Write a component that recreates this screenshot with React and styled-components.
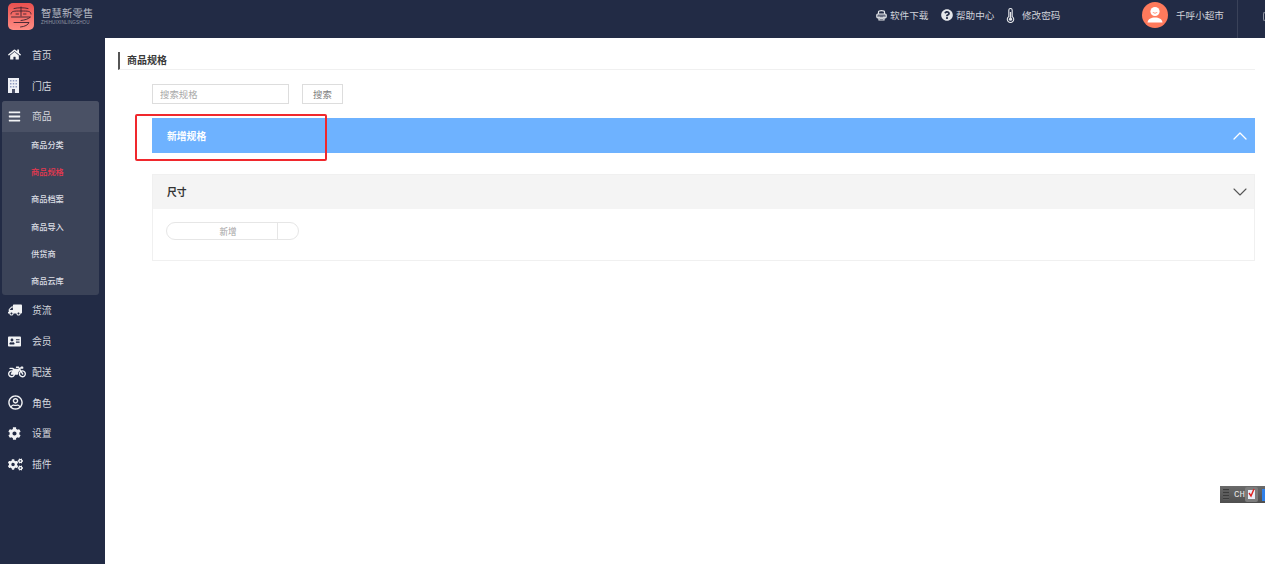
import React from 'react';
import styled, { createGlobalStyle } from 'styled-components';
import {
    FaAddressCard,
    FaBars,
    FaCog,
    FaCogs,
    FaHome,
    FaMotorcycle,
    FaQuestionCircle,
    FaRegUserCircle,
    FaTruck,
} from 'react-icons/fa';
import { ChevronDown, ChevronUp } from 'lucide-react';

const FONT = '"Noto Sans CJK SC", "Liberation Sans", sans-serif';

const GlobalStyle = createGlobalStyle`
    html, body {
        margin: 0;
        height: 100%;
        overflow: hidden;
        background: #fff;
        font-family: ${FONT};
    }
    * {
        box-sizing: border-box;
    }
`;

const Page = styled.div`
    width: 1265px;
    height: 564px;
    display: flex;
    flex-direction: column;
    position: relative;
    overflow: hidden;
`;

const Header = styled.header`
    height: 38px;
    flex: none;
    background: #222b45;
    display: flex;
    align-items: flex-start;
    color: #d0d3da;
    font-size: 9.6px;
`;

const Brand = styled.div`
    display: flex;
    gap: 7px;
    padding: 3px 0 0 8px;
    width: 876px;
    flex: none;
`;

const LogoMark = styled.svg`
    width: 26px;
    height: 27px;
    display: block;
`;

const BrandText = styled.div`
    display: flex;
    flex-direction: column;
    color: #b4b8c2;
`;

const BrandName = styled.div`
    font-size: 10.4px;
    line-height: 14px;
    margin-top: 3px;
    letter-spacing: 0.1px;
    white-space: nowrap;
`;

const BrandSub = styled.div`
    font-family: "Liberation Sans", sans-serif;
    font-size: 4.6px;
    line-height: 6px;
    white-space: nowrap;
    letter-spacing: 0.1px;
    color: #9297a5;
`;

const HeaderLink = styled.div`
    display: flex;
    align-items: center;
    height: 12px;
    margin-top: 9px;
    width: ${props => props.$width}px;
    flex: none;
    white-space: nowrap;
    svg {
        flex: none;
        color: #e4e6ea;
        margin-right: ${props => props.$gap}px;
    }
`;

const Avatar = styled.svg`
    width: 26px;
    height: 26px;
    margin-top: 2px;
    flex: none;
    display: block;
`;

const ShopName = styled.div`
    width: 61px;
    flex: none;
    margin: 9px 0 0 8px;
    line-height: 12px;
    white-space: nowrap;
`;

const HeaderDivider = styled.div`
    width: 1px;
    height: 38px;
    flex: none;
    background: #3a4259;
`;

const HeaderEdgeIcon = styled.div`
    width: 2px;
    height: 9px;
    margin: 12px 0 0 25px;
    flex: none;
    border-radius: 2px 0 0 2px;
    border: 1px solid #8d92a0;
    border-right: 0;
`;

const Body = styled.div`
    flex: 1;
    display: flex;
    min-height: 0;
`;

const Sidebar = styled.nav`
    width: 105px;
    flex: none;
    background: #222b45;
    padding-top: 1.5px;
`;

const NavRow = styled.div`
    height: 30.75px;
    display: flex;
    align-items: center;
    padding-left: 8px;
    color: #d6d8de;
    font-size: 9.8px;
    svg {
        flex: none;
        color: #f2f3f5;
    }
`;

const NavIcon = styled.span`
    width: 24px;
    flex: none;
    display: flex;
    align-items: center;
`;

const NavGroup = styled.div`
    width: 97px;
    margin-left: 2px;
    background: #3b4358;
    border-radius: 3px;
    overflow: hidden;
`;

const NavGroupHead = styled(NavRow)`
    background: #4a5165;
    padding-left: 6px;
`;

const SubItem = styled.div`
    height: 27.2px;
    padding: 0 0 2.5px 29px;
    display: flex;
    align-items: center;
    font-size: 8.2px;
    font-weight: 500;
    color: ${props => (props.$active ? '#e8384f' : '#dcdee4')};
`;

const FlippedTruck = styled(FaTruck)`
    transform: scaleX(-1);
`;

const Main = styled.main`
    flex: 1;
    min-width: 0;
    position: relative;
    padding: 14px 10px 0 13px;
`;

const TitleBar = styled.div`
    height: 18px;
    border-left: 2px solid #555;
    border-bottom: 1px solid #f0f0f0;
    padding-left: 7px;
    font-size: 10px;
    line-height: 16px;
    font-weight: 700;
    color: #3a3a3a;
`;

const Content = styled.div`
    padding-left: 34px;
`;

const SearchRow = styled.div`
    display: flex;
    gap: 13px;
    margin-top: 14px;
`;

const SearchInput = styled.input`
    width: 137px;
    height: 20px;
    border: 1px solid #ddd;
    outline: none;
    padding: 0 7px;
    font-family: ${FONT};
    font-size: 9.4px;
    &::placeholder {
        color: #a9a9a9;
        opacity: 1;
    }
`;

const SearchButton = styled.button`
    width: 41px;
    height: 20px;
    padding: 0;
    border: 1px solid #ddd;
    background: #fff;
    color: #808080;
    font-family: ${FONT};
    font-size: 9.4px;
`;

const AddBar = styled.div`
    height: 35px;
    margin-top: 14px;
    padding: 0 3px 0 15px;
    background: #6eb2ff;
    color: #fff;
    font-size: 9.8px;
    font-weight: 700;
    display: flex;
    align-items: center;
    justify-content: space-between;
`;

const SpecCard = styled.section`
    height: 87px;
    margin-top: 21px;
    border: 1px solid #f0f0f0;
`;

const SpecHead = styled.div`
    height: 34px;
    padding: 0 2px 0 14px;
    background: #f4f4f4;
    color: #333;
    font-size: 9.8px;
    font-weight: 700;
    display: flex;
    align-items: center;
    justify-content: space-between;
`;

const PillGroup = styled.div`
    width: 133px;
    height: 18px;
    margin: 13px 0 0 13px;
    border: 1px solid #e6e6e6;
    border-radius: 9px;
    display: flex;
`;

const PillLabel = styled.div`
    width: 111px;
    padding: 0 0 2px 12px;
    border-right: 1px solid #e6e6e6;
    color: #a3a3a3;
    font-size: 8.6px;
    line-height: 16px;
    text-align: center;
`;

const Annotation = styled.div`
    position: absolute;
    left: 30px;
    top: 76px;
    width: 192px;
    height: 47px;
    border: 2px solid #f0282d;
    border-radius: 2px;
    pointer-events: none;
`;

const ImeBar = styled.div`
    position: absolute;
    left: 1220px;
    top: 486px;
    width: 45px;
    height: 17px;
    background: linear-gradient(#6a6a6a, #4e4e4e);
    display: flex;
    align-items: center;
    overflow: hidden;
`;

const ImeGrip = styled.div`
    width: 6px;
    height: 11px;
    margin-left: 3px;
    flex: none;
    background: repeating-linear-gradient(#3c3c3c 0 1px, #5c5c5c 1px 3px);
`;

const ImeLang = styled.div`
    margin-left: 5px;
    width: 11px;
    flex: none;
    font-family: "Liberation Mono", monospace;
    font-size: 9px;
    color: #e6e6e6;
`;

const ImeTile = styled.svg`
    width: 13px;
    height: 15px;
    flex: none;
    display: block;
`;

const ImeBlue = styled.div`
    width: 6px;
    height: 12px;
    margin-left: 4px;
    flex: none;
    background: #2f80ea;
`;

const BuildingIcon = () => (
    <svg width='11' height='15' viewBox='0 0 11 15'>
        <rect width='11' height='15' fill='#eef0f6' />
        <g fill='#8f9bc0'>
            <rect x='2' y='2' width='1.5' height='1.5' />
            <rect x='4.75' y='2' width='1.5' height='1.5' />
            <rect x='7.5' y='2' width='1.5' height='1.5' />
            <rect x='2' y='5' width='1.5' height='1.5' />
            <rect x='4.75' y='5' width='1.5' height='1.5' />
            <rect x='7.5' y='5' width='1.5' height='1.5' />
            <rect x='2' y='8' width='1.5' height='1.5' />
            <rect x='4.75' y='8' width='1.5' height='1.5' />
            <rect x='7.5' y='8' width='1.5' height='1.5' />
        </g>
        <rect x='4' y='11' width='3' height='4' fill='#4a5068' />
    </svg>
);

const PrinterIcon = () => (
    <svg width='11' height='11' viewBox='0 0 11 11' fill='none' stroke='currentColor' strokeWidth='1.2'>
        <path d='M2.5 4 V2 C2.5 1 3.5 .7 5.5 .7 S8.5 1 8.5 2 V4' />
        <rect x='.8' y='4' width='9.4' height='3.8' rx='1' fill='currentColor' fillOpacity='.35' />
        <path d='M3 6.5 V10 H8 V6.5' />
        <path d='M4 8.5 H7' strokeWidth='.8' />
    </svg>
);

const ThermometerIcon = () => (
    <svg width='9' height='15' viewBox='0 0 9 15' fill='none' stroke='currentColor' strokeWidth='1.1'>
        <path d='M2.8 8.6 V2.2 a1.7 1.7 0 0 1 3.4 0 V8.6 a3.2 3.2 0 1 1 -3.4 0 Z' />
        <path d='M4.5 4 V11' strokeWidth='1.4' />
        <circle cx='4.5' cy='11.2' r='1.6' fill='currentColor' stroke='none' />
    </svg>
);

const AvatarMark = () => (
    <Avatar viewBox='0 0 26 26'>
        <circle cx='13' cy='13' r='13' fill='#ff7a5c' />
        <circle cx='13' cy='9.5' r='4.6' fill='#fff' />
        <path d='M10.8 10 C11.4 11.6 14.6 11.6 15.2 10' fill='none' stroke='#ff7a5c' strokeWidth='.8' />
        <path d='M5.5 20.5 C6 16.8 9 15.4 13 15.4 S20 16.8 20.5 20.5 Z' fill='#fff' />
    </Avatar>
);

const NAV_TOP = [
    { label: '首页', icon: <FaHome size={13} /> },
    { label: '门店', icon: <BuildingIcon /> },
];

const NAV_SUB = ['商品分类', '商品规格', '商品档案', '商品导入', '供货商', '商品云库'];

const NAV_BOTTOM = [
    { label: '货流', icon: <FlippedTruck size={14} /> },
    { label: '会员', icon: <FaAddressCard size={13} /> },
    { label: '配送', icon: <FaMotorcycle size={18} /> },
    { label: '角色', icon: <FaRegUserCircle size={15} /> },
    { label: '设置', icon: <FaCog size={13} /> },
    { label: '插件', icon: <FaCogs size={15} /> },
];

const Logo = () => (
    <LogoMark viewBox='0 0 26 27'>
        <defs>
            <linearGradient id='logo-fill' x1='0' y1='0' x2='0' y2='1'>
                <stop offset='0' stopColor='#e9504f' />
                <stop offset='1' stopColor='#ff8d84' />
            </linearGradient>
        </defs>
        <rect width='26' height='27' rx='5' fill='url(#logo-fill)' />
        <g fill='none' stroke='#3a2230' strokeWidth='.9' strokeLinecap='round'>
            <path d='M6 5.5 C10 4.5 16 4.5 20 5.5' />
            <path d='M3 11 C3 8 6 8 13 8 S23 8 23 11' />
            <path d='M13 4 V13' />
            <path d='M8 11 H10.5 M15.5 11 H18' />
            <path d='M3.5 14 H22.5 C20 16.2 17 17 13 17.5' />
            <path d='M6 19.5 H21 C20 22 17 23.5 12.5 24' />
        </g>
    </LogoMark>
);

const App = () => (
    <Page>
        <GlobalStyle />
        <Header>
            <Brand>
                <Logo />
                <BrandText>
                    <BrandName>智慧新零售</BrandName>
                    <BrandSub>ZHIHUIXINLINGSHOU</BrandSub>
                </BrandText>
            </Brand>
            <HeaderLink $width={65} $gap={3}>
                <PrinterIcon />
                软件下载
            </HeaderLink>
            <HeaderLink $width={65} $gap={3}>
                <FaQuestionCircle size={12} />
                帮助中心
            </HeaderLink>
            <HeaderLink $width={136} $gap={7}>
                <ThermometerIcon />
                修改密码
            </HeaderLink>
            <AvatarMark />
            <ShopName>千呼小超市</ShopName>
            <HeaderDivider />
            <HeaderEdgeIcon />
        </Header>
        <Body>
            <Sidebar>
                {NAV_TOP.map(item => (
                    <NavRow key={item.label}>
                        <NavIcon>{item.icon}</NavIcon>
                        {item.label}
                    </NavRow>
                ))}
                <NavGroup>
                    <NavGroupHead>
                        <NavIcon>
                            <FaBars size={13} />
                        </NavIcon>
                        商品
                    </NavGroupHead>
                    {NAV_SUB.map(label => (
                        <SubItem key={label} $active={label === '商品规格'}>
                            {label}
                        </SubItem>
                    ))}
                </NavGroup>
                {NAV_BOTTOM.map(item => (
                    <NavRow key={item.label}>
                        <NavIcon>{item.icon}</NavIcon>
                        {item.label}
                    </NavRow>
                ))}
            </Sidebar>
            <Main>
                <TitleBar>商品规格</TitleBar>
                <Content>
                    <SearchRow>
                        <SearchInput placeholder='搜索规格' />
                        <SearchButton>搜索</SearchButton>
                    </SearchRow>
                    <AddBar>
                        新增规格
                        <ChevronUp size={24} strokeWidth={1.3} />
                    </AddBar>
                    <SpecCard>
                        <SpecHead>
                            尺寸
                            <ChevronDown size={24} strokeWidth={1.1} color='#555' />
                        </SpecHead>
                        <PillGroup>
                            <PillLabel>新增</PillLabel>
                        </PillGroup>
                    </SpecCard>
                </Content>
                <Annotation />
            </Main>
        </Body>
        <ImeBar>
            <ImeGrip />
            <ImeLang>CH</ImeLang>
            <ImeTile viewBox='0 0 13 15'>
                <rect width='13' height='15' rx='2' fill='#7c7c7c' />
                <rect x='3' y='3' width='7' height='9' fill='#e8eef8' />
                <path d='M4 6 L6 9 L9 2' fill='none' stroke='#e02020' strokeWidth='1.4' />
            </ImeTile>
            <ImeBlue />
        </ImeBar>
    </Page>
);

export default App;
